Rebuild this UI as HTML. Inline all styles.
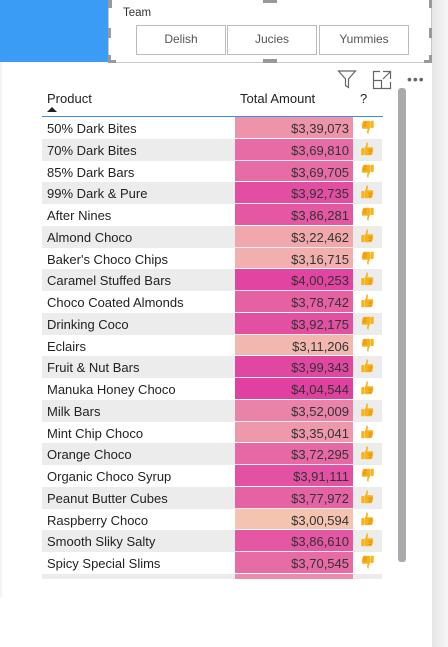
<!DOCTYPE html>
<html><head><meta charset="utf-8"><style>
*{margin:0;padding:0;box-sizing:border-box}
body{width:448px;height:647px;position:relative;background:#fff;font-family:"Liberation Sans",sans-serif;overflow:hidden}
.abs{position:absolute}
.row{position:absolute;left:42px;width:340px;height:21.75px;font-size:13px;color:#222}
.row.g{background:#ececec}
.row .p{position:absolute;left:5px;top:4px}
.row .a{position:absolute;left:193px;width:118px;top:0;height:20.75px;text-align:right;padding-right:4px;padding-top:4px;color:#333}
.row svg{position:absolute;left:319px;top:3px}
.btn{position:absolute;top:25px;height:30px;border:1.5px solid #bcbcbc;font-size:12px;color:#555;text-align:center;line-height:27px;background:#fff}
</style></head><body>
<div class="abs" style="left:0;top:0;width:108px;height:62px;background:#3b9cf6"></div>
<div class="abs" style="left:432px;top:0;width:16px;height:647px;background:linear-gradient(90deg,#e6e6e6,#f6f6f6)"></div>
<div class="abs" style="left:0;top:62px;width:3px;height:535px;background:linear-gradient(90deg,#f0f0f0,#fff)"></div>
<div class="abs" style="left:108px;top:0;width:324px;height:63px;border:1px solid #c9c9c9;border-top:none;background:#fff"></div>
<div class="abs" style="left:108px;top:0;width:4px;height:8px;background:#999"></div>
<div class="abs" style="left:108px;top:55px;width:8px;height:8px;border-left:3px solid #999;border-bottom:3px solid #999"></div>
<div class="abs" style="left:424px;top:55px;width:8px;height:8px;border-right:3px solid #999;border-bottom:3px solid #999"></div>
<div class="abs" style="left:263px;top:59px;width:14px;height:4px;background:#999"></div>
<div class="abs" style="left:263px;top:0;width:14px;height:3px;background:#999"></div>
<div class="abs" style="left:424px;top:0;width:8px;height:8px;border-right:3px solid #999"></div>
<div class="abs" style="left:108px;top:28px;width:3px;height:10px;background:#999"></div>
<div class="abs" style="left:429px;top:28px;width:3px;height:10px;background:#999"></div>
<div class="abs" style="left:123px;top:7px;font-size:11.5px;color:#333">Team</div>
<div class="btn" style="left:136px;width:90px">Delish</div>
<div class="btn" style="left:227px;width:90px">Jucies</div>
<div class="btn" style="left:319px;width:90px">Yummies</div>
<svg class="abs" style="left:337px;top:69px" width="20" height="20" viewBox="0 0 20 20"><path d="M1.5 2H18.5L11.5 10V18.5L8.5 16.5V10Z" fill="none" stroke="#666" stroke-width="1.2"/></svg>
<svg class="abs" style="left:372px;top:70px" width="20" height="20" viewBox="0 0 20 20"><path d="M8 1.5H1.5V18.5H18.5V12M1.5 10.5H9.5V18.5M11 1.5H18.5V9M18.5 1.5L11 9" fill="none" stroke="#666" stroke-width="1.2"/></svg>
<div class="abs" style="left:407px;top:71px;font-size:14px;color:#666;letter-spacing:1px">•••</div>
<div class="abs" style="left:47px;top:91px;font-size:13px;color:#222">Product</div>
<svg class="abs" style="left:47px;top:106px" width="10" height="6"><path d="M0 6L5 1L10 6Z" fill="#222"/></svg>
<div class="abs" style="left:240px;top:91px;font-size:13px;color:#222">Total Amount</div>
<div class="abs" style="left:360px;top:91px;font-size:13px;color:#222">?</div>
<div class="abs" style="left:42px;top:116px;width:341px;height:1px;background:#3a8ee6"></div>
<div class="abs" style="left:398px;top:88px;width:8px;height:474px;background:#aaa;border-radius:3px"></div>
<svg width="0" height="0" style="position:absolute"><defs>
<g id="up"><path d="M5.5 0.3C6.8 0.3 7.2 1.5 6.8 3.2L6.3 5.3H11C12.2 5.3 12.5 6.5 11.9 7.3C12.5 8 12.4 9 11.7 9.5C12.1 10.2 11.9 11.1 11.2 11.4C11.4 12.3 10.9 13.3 9.8 13.3H5.5C4.6 13.3 4 13 3.6 12.5V6.4C4.6 4.8 5.5 3 5.5 0.3Z" fill="#f7b21c"/><rect x="0.3" y="6" width="3" height="7.3" rx="0.9" fill="#f7b21c"/><path d="M7.5 8H11M7.5 9.8H11M7.5 11.5H10.5" stroke="#d88a0a" stroke-width="0.7"/></g>
<g id="dn" transform="rotate(180 6.5 7)"><use href="#up"/></g>
</defs></svg>
<div class="row g" style="top:117px;background:#fff"><span class="p">50% Dark Bites</span><span class="a" style="background:rgb(237,147,170)">$3,39,073</span><svg width="13" height="14"><use href="#dn"/></svg></div>
<div class="row g" style="top:138.75px"><span class="p">70% Dark Bites</span><span class="a" style="background:rgb(231,108,165)">$3,69,810</span><svg width="13" height="14"><use href="#up"/></svg></div>
<div class="row" style="top:160.5px"><span class="p">85% Dark Bars</span><span class="a" style="background:rgb(231,108,165)">$3,69,705</span><svg width="13" height="14"><use href="#dn"/></svg></div>
<div class="row g" style="top:182.25px"><span class="p">99% Dark &amp; Pure</span><span class="a" style="background:rgb(226,79,162)">$3,92,735</span><svg width="13" height="14"><use href="#up"/></svg></div>
<div class="row" style="top:204px"><span class="p">After Nines</span><span class="a" style="background:rgb(228,87,163)">$3,86,281</span><svg width="13" height="14"><use href="#dn"/></svg></div>
<div class="row g" style="top:225.75px"><span class="p">Almond Choco</span><span class="a" style="background:rgb(240,168,173)">$3,22,462</span><svg width="13" height="14"><use href="#up"/></svg></div>
<div class="row" style="top:247.5px"><span class="p">Baker's Choco Chips</span><span class="a" style="background:rgb(241,176,174)">$3,16,715</span><svg width="13" height="14"><use href="#dn"/></svg></div>
<div class="row g" style="top:269.25px"><span class="p">Caramel Stuffed Bars</span><span class="a" style="background:rgb(225,69,161)">$4,00,253</span><svg width="13" height="14"><use href="#up"/></svg></div>
<div class="row" style="top:291px"><span class="p">Choco Coated Almonds</span><span class="a" style="background:rgb(229,97,164)">$3,78,742</span><svg width="13" height="14"><use href="#up"/></svg></div>
<div class="row g" style="top:312.75px"><span class="p">Drinking Coco</span><span class="a" style="background:rgb(226,80,162)">$3,92,175</span><svg width="13" height="14"><use href="#dn"/></svg></div>
<div class="row" style="top:334.5px"><span class="p">Eclairs</span><span class="a" style="background:rgb(242,183,174)">$3,11,206</span><svg width="13" height="14"><use href="#dn"/></svg></div>
<div class="row g" style="top:356.25px"><span class="p">Fruit &amp; Nut Bars</span><span class="a" style="background:rgb(225,71,161)">$3,99,343</span><svg width="13" height="14"><use href="#up"/></svg></div>
<div class="row" style="top:378px"><span class="p">Manuka Honey Choco</span><span class="a" style="background:rgb(224,64,160)">$4,04,544</span><svg width="13" height="14"><use href="#up"/></svg></div>
<div class="row g" style="top:399.75px"><span class="p">Milk Bars</span><span class="a" style="background:rgb(234,131,168)">$3,52,009</span><svg width="13" height="14"><use href="#up"/></svg></div>
<div class="row" style="top:421.5px"><span class="p">Mint Chip Choco</span><span class="a" style="background:rgb(237,152,171)">$3,35,041</span><svg width="13" height="14"><use href="#up"/></svg></div>
<div class="row g" style="top:443.25px"><span class="p">Orange Choco</span><span class="a" style="background:rgb(230,105,165)">$3,72,295</span><svg width="13" height="14"><use href="#up"/></svg></div>
<div class="row" style="top:465px"><span class="p">Organic Choco Syrup</span><span class="a" style="background:rgb(227,81,162)">$3,91,111</span><svg width="13" height="14"><use href="#dn"/></svg></div>
<div class="row g" style="top:486.75px"><span class="p">Peanut Butter Cubes</span><span class="a" style="background:rgb(229,98,164)">$3,77,972</span><svg width="13" height="14"><use href="#up"/></svg></div>
<div class="row" style="top:508.5px"><span class="p">Raspberry Choco</span><span class="a" style="background:rgb(244,196,176)">$3,00,594</span><svg width="13" height="14"><use href="#up"/></svg></div>
<div class="row g" style="top:530.25px"><span class="p">Smooth Sliky Salty</span><span class="a" style="background:rgb(227,87,163)">$3,86,610</span><svg width="13" height="14"><use href="#up"/></svg></div>
<div class="row" style="top:552px"><span class="p">Spicy Special Slims</span><span class="a" style="background:rgb(231,107,165)">$3,70,545</span><svg width="13" height="14"><use href="#dn"/></svg></div>
<div class="abs" style="left:42px;top:574px;width:340px;height:5px;background:#ececec"></div>
<div class="abs" style="left:235px;top:574px;width:118px;height:5px;background:rgb(236,140,170)"></div>
</body></html>
